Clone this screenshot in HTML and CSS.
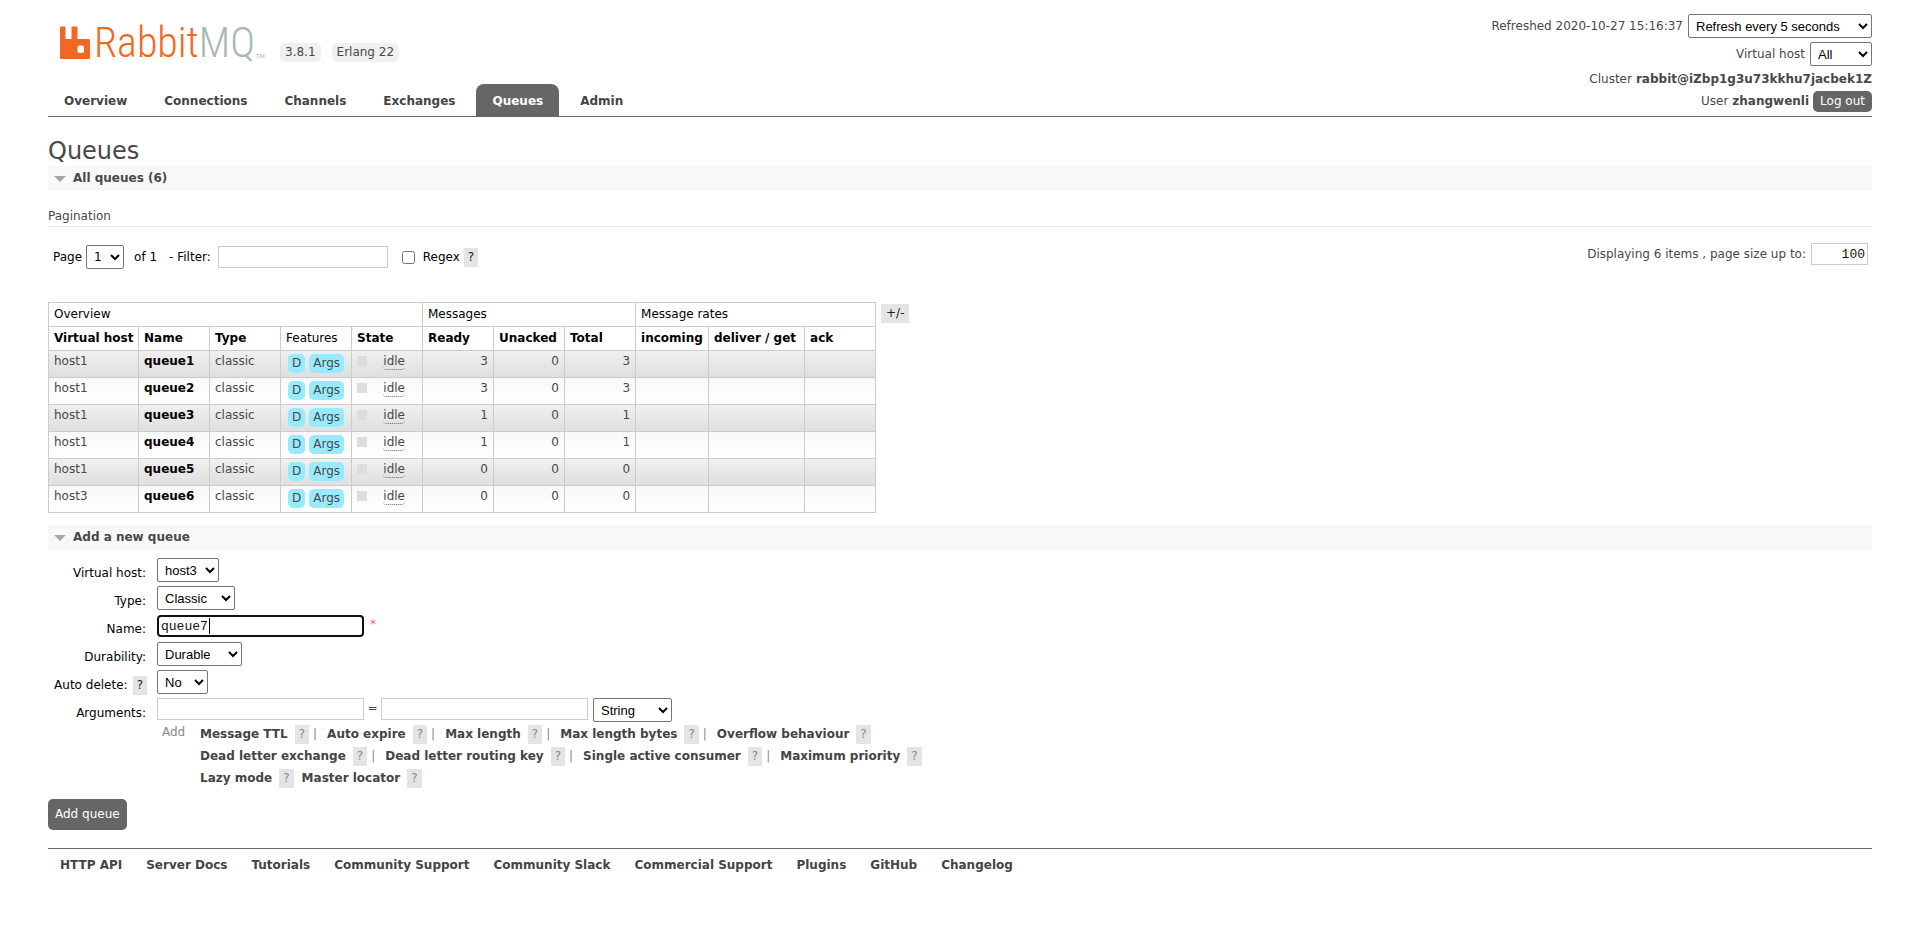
FILE: index.html
```html
<!DOCTYPE html>
<html lang="en">
<head>
<meta charset="utf-8">
<title>RabbitMQ Management</title>
<link rel="stylesheet" href="styles.css">
</head>
<body>
<header class="header">
  <div class="header-left">
    <div class="brand">
      <a class="logo" href="#" aria-label="RabbitMQ">
        <svg class="logo-mark" viewBox="0 0 30 33" width="30" height="33" aria-hidden="true"><path fill="#f26822" fill-rule="evenodd" d="M1 .5H4.500Q5.500 .5 5.500 1.500V13H11.500V1.500Q11.500 .5 12.500 .5H16.500Q17.500 .5 17.500 1.500V13H28.500Q30 13 30 14.500V32Q30 33 29 33H1Q0 33 0 32V1.500Q0 .5 1 .5ZM19.500 19.500Q17.500 19.500 17.500 21.500V25Q17.500 27 19.500 27H22Q24 27 24 25V21.500Q24 19.500 22 19.500Z"/></svg>
        <span class="logo-rabbit">Rabbit</span><span class="logo-mq">MQ</span><span class="logo-tm">TM</span>
      </a>
      <span class="version">3.8.1</span>
      <span class="version">Erlang 22</span>
    </div>
    <nav class="tabs">
      <a href="#">Overview</a>
      <a href="#">Connections</a>
      <a href="#">Channels</a>
      <a href="#">Exchanges</a>
      <a href="#" class="selected">Queues</a>
      <a href="#">Admin</a>
    </nav>
  </div>
  <div class="login">
    <div class="login-row tall"><label for="refresh">Refreshed 2020-10-27 15:16:37</label><select id="refresh" class="w-refresh"><option>Refresh every 5 seconds</option></select></div>
    <div class="login-row tall"><label for="vhost-all">Virtual host</label><select id="vhost-all" class="w-all"><option>All</option></select></div>
    <div class="login-row">Cluster <b>rabbit@iZbp1g3u73kkhu7jacbek1Z</b></div>
    <div class="login-row">User <b>zhangwenli</b><button class="logout" type="button">Log out</button></div>
  </div>
</header>

<main>
  <h1>Queues</h1>
  <h2>All queues (6)</h2>
  <div class="pagination-title">Pagination</div>
  <div class="pagination">
    <div class="pager">
      <label for="page">Page</label>
      <select id="page" class="w-page"><option>1</option></select>
      <span class="pager-of">of 1</span>
      <label class="pager-filter" for="filter">- Filter:</label>
      <input id="filter" class="w-filter" type="text">
      <input id="regex" class="regex-box" type="checkbox">
      <label for="regex">Regex</label>
      <button class="help dark" type="button">?</button>
    </div>
    <div class="page-size">
      <label for="size">Displaying 6 items , page size up to:</label>
      <input id="size" class="w-size" type="text" value="100">
    </div>
  </div>

  <div class="updatable">
    <table class="list">
      <colgroup><col class="c-vhost"><col class="c-std"><col class="c-std"><col class="c-std"><col class="c-std"><col class="c-std"><col class="c-std"><col class="c-std"><col class="c-in"><col class="c-get"><col class="c-std"></colgroup>
      <thead>
        <tr><th class="plain" colspan="5">Overview</th><th class="plain" colspan="3">Messages</th><th class="plain" colspan="3">Message rates</th></tr>
        <tr><th>Virtual host</th><th>Name</th><th>Type</th><th class="plain">Features</th><th>State</th><th>Ready</th><th>Unacked</th><th>Total</th><th>incoming</th><th>deliver / get</th><th>ack</th></tr>
      </thead>
      <tbody>
        <tr><td>host1</td><td><a href="#">queue1</a></td><td>classic</td><td><span class="tags"><span class="tag">D</span><span class="tag">Args</span></span></td><td><span class="state"><abbr>idle</abbr></span></td><td class="r">3</td><td class="r">0</td><td class="r">3</td><td></td><td></td><td></td></tr>
        <tr><td>host1</td><td><a href="#">queue2</a></td><td>classic</td><td><span class="tags"><span class="tag">D</span><span class="tag">Args</span></span></td><td><span class="state"><abbr>idle</abbr></span></td><td class="r">3</td><td class="r">0</td><td class="r">3</td><td></td><td></td><td></td></tr>
        <tr><td>host1</td><td><a href="#">queue3</a></td><td>classic</td><td><span class="tags"><span class="tag">D</span><span class="tag">Args</span></span></td><td><span class="state"><abbr>idle</abbr></span></td><td class="r">1</td><td class="r">0</td><td class="r">1</td><td></td><td></td><td></td></tr>
        <tr><td>host1</td><td><a href="#">queue4</a></td><td>classic</td><td><span class="tags"><span class="tag">D</span><span class="tag">Args</span></span></td><td><span class="state"><abbr>idle</abbr></span></td><td class="r">1</td><td class="r">0</td><td class="r">1</td><td></td><td></td><td></td></tr>
        <tr><td>host1</td><td><a href="#">queue5</a></td><td>classic</td><td><span class="tags"><span class="tag">D</span><span class="tag">Args</span></span></td><td><span class="state"><abbr>idle</abbr></span></td><td class="r">0</td><td class="r">0</td><td class="r">0</td><td></td><td></td><td></td></tr>
        <tr><td>host3</td><td><a href="#">queue6</a></td><td>classic</td><td><span class="tags"><span class="tag">D</span><span class="tag">Args</span></span></td><td><span class="state"><abbr>idle</abbr></span></td><td class="r">0</td><td class="r">0</td><td class="r">0</td><td></td><td></td><td></td></tr>
      </tbody>
    </table>
    <button class="help columns" type="button">+/-</button>
  </div>

  <h2>Add a new queue</h2>
  <form>
    <div class="fields">
      <label for="vhost">Virtual host:</label>
      <div class="field"><select id="vhost" class="w-vhost"><option>host3</option></select></div>
      <label for="type">Type:</label>
      <div class="field"><select id="type" class="w-type"><option>Classic</option></select></div>
      <label for="name">Name:</label>
      <div class="field name-field"><input id="name" class="w-text name" type="text" value="queue7" autofocus><span class="mand">*</span></div>
      <label for="durability">Durability:</label>
      <div class="field"><select id="durability" class="w-durable"><option>Durable</option></select></div>
      <div class="label-help"><label for="autodel">Auto delete:</label><button class="help dark" type="button">?</button></div>
      <div class="field"><select id="autodel" class="w-no"><option>No</option></select></div>
      <label for="argkey">Arguments:</label>
      <div class="field"><input id="argkey" class="w-text" type="text"><span class="equals">=</span><input class="w-text" type="text" aria-label="Argument value"><select class="w-string" aria-label="Argument type"><option>String</option></select></div>
    </div>
    <div class="shortcuts">
      <span>Add</span>
      <div class="shortcut-lines">
        <div><a href="#">Message TTL</a><button class="help" type="button">?</button><i>|</i><a href="#">Auto expire</a><button class="help" type="button">?</button><i>|</i><a href="#">Max length</a><button class="help" type="button">?</button><i>|</i><a href="#">Max length bytes</a><button class="help" type="button">?</button><i>|</i><a href="#">Overflow behaviour</a><button class="help" type="button">?</button></div>
        <div><a href="#">Dead letter exchange</a><button class="help" type="button">?</button><i>|</i><a href="#">Dead letter routing key</a><button class="help" type="button">?</button><i>|</i><a href="#">Single active consumer</a><button class="help" type="button">?</button><i>|</i><a href="#">Maximum priority</a><button class="help" type="button">?</button></div>
        <div><a href="#">Lazy mode</a><button class="help last" type="button">?</button><a href="#">Master locator</a><button class="help" type="button">?</button></div>
      </div>
    </div>
    <button class="submit" type="button">Add queue</button>
  </form>
</main>

<footer class="footer">
  <a href="#">HTTP API</a>
  <a href="#">Server Docs</a>
  <a href="#">Tutorials</a>
  <a href="#">Community Support</a>
  <a href="#">Community Slack</a>
  <a href="#">Commercial Support</a>
  <a href="#">Plugins</a>
  <a href="#">GitHub</a>
  <a href="#">Changelog</a>
</footer>
</body>
</html>
```

FILE: styles.css
```css
* { box-sizing: border-box; }

body {
  margin: 0;
  padding: 0 48px;
  background: #fff;
  color: #484848;
  font: 12px/15px Verdana, "DejaVu Sans", sans-serif;
}

a { color: #444; font-weight: bold; text-decoration: none; }

select {
  height: 24px;
  padding: 0 3px;
  border: 1px solid #767676;
  border-radius: 2px;
  background: #fff;
  color: #000;
  font: 13px "Liberation Sans", Arial, sans-serif;
}

input[type="text"] {
  height: 22px;
  padding: 2px;
  border: 1px solid #ccc;
  background: #fff;
  color: #111;
  font: 13px "Liberation Mono", "Courier New", monospace;
}

button { font: inherit; border: 0; cursor: pointer; }

.w-refresh { width: 184px; }
.w-all, .w-vhost { width: 62px; }
.w-type { width: 78px; }
.w-durable { width: 85px; }
.w-no { width: 51px; }
.w-string { width: 79px; margin-left: 5px; }
.w-page { width: 38px; font: 12px "DejaVu Sans", sans-serif; }
.w-filter { width: 170px; }
.w-text { width: 207px; }
.w-size { width: 57px; text-align: right; }

/* Header */
.header {
  display: flex;
  justify-content: space-between;
  border-bottom: 1px solid #666;
  margin-bottom: 20px;
}
.header-left {
  display: flex;
  flex-direction: column;
  justify-content: space-between;
  padding-top: 21px;
}
.brand { display: flex; align-items: flex-end; gap: 11px; padding-left: 12px; }
.logo { display: flex; align-items: flex-end; width: 209px; height: 41px; padding-bottom: 3px; font-weight: normal; }
.logo-mark { flex: none; margin-right: 4px; }
.logo-rabbit, .logo-mq {
  font: 300 42px/32px "Roboto Condensed", "Liberation Sans Narrow", Roboto, sans-serif;
}
.logo-rabbit { color: #f26822; }
.logo-mq { color: #a9b8b1; }
.logo-tm { color: #a9b8b1; font: 6px/6px Roboto, sans-serif; margin-left: 1px; }
.version { padding: 2px 5px; border-radius: 5px; background: #f0f0f0; }

.tabs { display: flex; gap: 5px; }
.tabs a { padding: 10px 16px 7px; border-radius: 8px 8px 0 0; }
.tabs .selected { background: #666; color: #fff; }

.login { display: flex; flex-direction: column; padding: 12px 0 4px; }
.login-row { display: flex; justify-content: flex-end; align-items: center; gap: 4px; height: 22px; }
.login-row.tall { height: 28px; gap: 5px; }
.logout { height: 21px; padding: 0 7px; border-radius: 5px; background: #666; color: #fff; }

/* Sections */
h1 { margin: 0; font-size: 24px; line-height: 29px; font-weight: normal; }
h2 {
  display: flex;
  align-items: center;
  gap: 7px;
  height: 25px;
  margin: 0;
  padding-left: 6px;
  background: #f8f8f8;
  font-size: 12px;
}
h2::before {
  content: "";
  border: solid transparent;
  border-width: 6px 6px 0;
  border-top-color: #a6a6a6;
}

.pagination-title { margin-top: 18px; padding-bottom: 2px; border-bottom: 1px solid #e4e4e4; }
.pagination { display: flex; justify-content: space-between; align-items: flex-start; margin-bottom: 32px; }
.pager { display: flex; align-items: center; padding: 18px 0 1px 5px; color: #000; }
.pager select { margin: 0 10px 0 4px; }
.pager-filter { margin: 0 7px 0 12px; }
.regex-box { width: 13px; height: 13px; margin: 0 8px 0 14px; }
.pager .help { margin-left: 4px; }
.page-size { display: flex; align-items: center; gap: 5px; padding: 16px 4px 0 0; }

.help { height: 19px; padding: 0 4px; background: #e4e4e4; color: #888; }
.help.dark { color: #222; }

/* Queue table */
.updatable { display: flex; align-items: flex-start; gap: 5px; margin-bottom: 12px; }
.list { width: 828px; table-layout: fixed; border-collapse: collapse; }
.c-vhost { width: 90px; }
.c-std { width: 71px; }
.c-in { width: 73px; }
.c-get { width: 96px; }
.list th, .list td { padding: 3px 0 0 5px; border: 1px solid #ccc; vertical-align: top; text-align: left; white-space: nowrap; }
.list th { height: 24px; padding-top: 4px; color: #000; }
.list th.plain { font-weight: normal; }
.list td { height: 27px; }
.list td.r { padding-right: 5px; text-align: right; }
.list td a { color: #000; }
.list tbody tr { background: linear-gradient(#f8f8f8, #fff); }
.list tbody tr:nth-child(odd) { background: linear-gradient(#f0f0f0, #dedede); }
.tags { display: flex; gap: 4px; padding-left: 2px; }
.tag { height: 19px; padding: 2px 4px; border-radius: 5px; background: #98ebff; }
.state { display: flex; justify-content: space-between; align-items: flex-start; padding-right: 17px; }
.state::before { content: ""; width: 10px; height: 10px; margin-top: 2px; background: #ddd; }
.state abbr { border-bottom: 1px dotted #666; border-radius: 4px; line-height: 15px; }
.columns { margin-top: 2px; padding: 0 5px; color: #222; }

/* Form */
.fields { display: grid; grid-template-columns: 98px 1fr; gap: 4px 11px; padding-top: 8px; color: #000; }
.fields label { padding-top: 8px; text-align: right; white-space: nowrap; }
.label-help { display: flex; justify-content: flex-end; gap: 5px; margin-right: -1px; }
.label-help .help { margin-top: 6px; }
.label-help, .fields > label { height: 24px; }
.field { display: flex; align-items: flex-start; height: 24px; color: #484848; }
.name-field { position: relative; padding-top: 1px; }
.name-field .name { padding: 1px 2px; border: 2px solid #111; border-radius: 4px; outline: 0; caret-color: transparent; }
.name-field::after {
  content: "";
  position: absolute;
  top: 4px;
  left: 52px;
  width: 1px;
  height: 16px;
  background: #000;
}
.mand { margin-left: 6px; padding-top: 2px; color: #f66; }
.equals { width: 17px; padding-top: 3px; text-align: center; }

.shortcuts { display: flex; padding: 1px 0 0 114px; color: #888; }
.shortcuts > span { width: 38px; padding-top: 2px; }
.shortcut-lines div { display: flex; align-items: center; height: 22px; }
.shortcuts .help { margin-left: 7px; }
.shortcuts .help.last { margin-right: 8px; }
.shortcuts i { margin: 0 10px 0 4px; font-style: normal; }

.submit { height: 31px; margin: 10px 0 18px; padding: 0 7px; border-radius: 5px; background: #666; color: #fff; }

.footer { display: flex; flex-wrap: wrap; gap: 24px; padding: 9px 12px; border-top: 1px solid #666; }
```
